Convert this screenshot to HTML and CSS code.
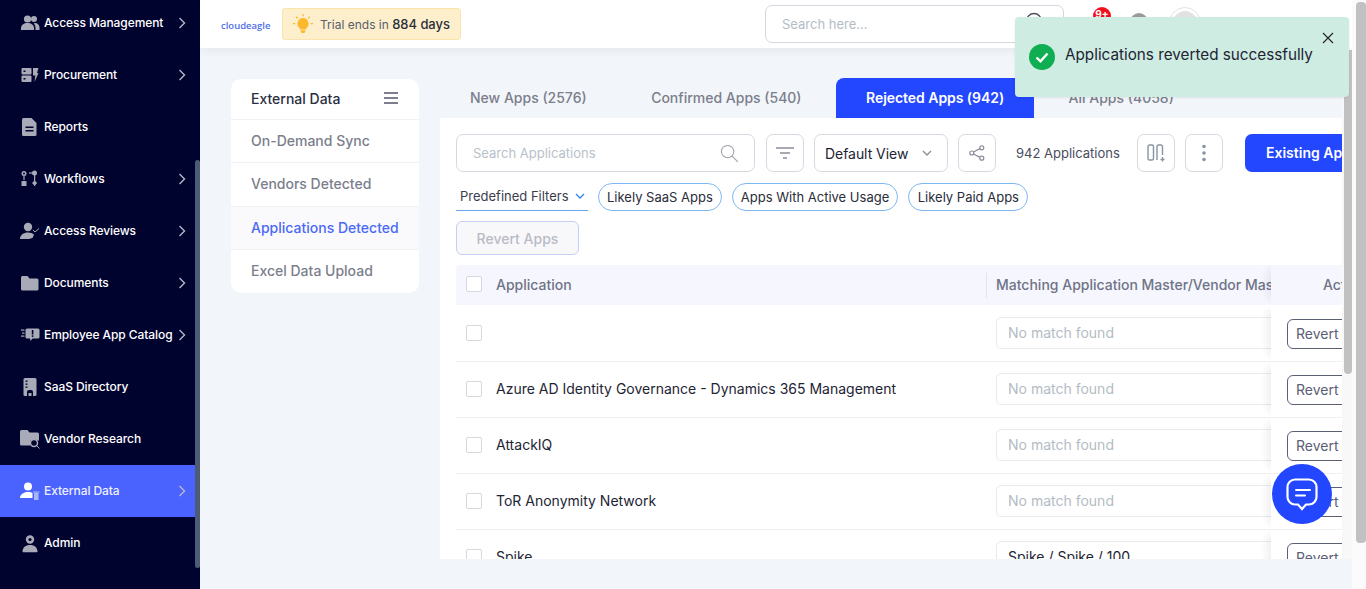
FILE: index.html
```html
<!DOCTYPE html>
<html lang="en">
<head>
<meta charset="utf-8">
<title>External Data - Applications Detected</title>
<link rel="stylesheet" href="styles.css">
</head>
<body>
<div class="app">
  <aside class="sidebar">
    <nav class="side-list">
      <a class="side-item"><svg class="ico" viewBox="0 0 20 20"><circle cx="7.500" cy="6" r="3.600"/><circle cx="14" cy="6" r="3"/><path d="M1 17v-2c0-3 3-5 6.500-5s6.500 2 6.500 5v2z"/><path d="M15 10c2.500 0 4.500 2 4.500 4.500V17H15.500v-2c0-2-.6-3.500-1.800-4.600z"/></svg><span class="side-label">Access Management</span><svg class="chev" viewBox="0 0 8 12"><path d="M1.500 1l5 5-5 5"/></svg></a>
      <a class="side-item"><svg class="ico" viewBox="0 0 20 20"><rect x="1.500" y="3" width="10" height="6.500" rx="1"/><rect x="1.500" y="10.500" width="10" height="6.500" rx="1"/><rect class="ico-cut" x="3.500" y="5.500" width="2" height="1.500"/><rect class="ico-cut" x="3.500" y="13" width="2" height="1.500"/><path d="M13 3h5.500l-1.500 5h1.500L14.500 17l.8-6.500H13z"/></svg><span class="side-label">Procurement</span><svg class="chev" viewBox="0 0 8 12"><path d="M1.500 1l5 5-5 5"/></svg></a>
      <a class="side-item"><svg class="ico" viewBox="0 0 20 20"><path d="M3.500 1h8l5 5v11.500a1.500 1.500 0 0 1-1.500 1.500H3.500A1.500 1.500 0 0 1 2 17.500v-15A1.500 1.500 0 0 1 3.500 1z"/><rect class="ico-cut" x="5.500" y="9.500" width="8" height="1.500"/><rect class="ico-cut" x="5.500" y="13" width="8" height="1.500"/></svg><span class="side-label">Reports</span></a>
      <a class="side-item"><svg class="ico" viewBox="0 0 20 20"><circle cx="4" cy="4.500" r="2.500"/><circle class="ico-cut" cx="4" cy="4.500" r="1"/><rect x="3.400" y="7" width="1.200" height="4"/><rect x="1.500" y="12" width="5" height="5" rx=".6"/><circle cx="14.500" cy="4" r="2.500"/><rect x="9" y="3.400" width="5" height="1.200"/><rect x="14" y="4" width="1.200" height="13"/><path d="M14.600 11.500l2.600 2.600-2.600 2.600-2.600-2.600z"/></svg><span class="side-label">Workflows</span><svg class="chev" viewBox="0 0 8 12"><path d="M1.500 1l5 5-5 5"/></svg></a>
      <a class="side-item"><svg class="ico" viewBox="0 0 20 20"><circle cx="8" cy="6" r="4.200"/><path d="M0 18c0-4 3.500-6.500 8-6.500 2.500 0 4.700.8 6 2.200L12.500 17 9 18z"/><path class="ico-line" d="M13 9l2 2 4-3.500"/></svg><span class="side-label">Access Reviews</span><svg class="chev" viewBox="0 0 8 12"><path d="M1.500 1l5 5-5 5"/></svg></a>
      <a class="side-item"><svg class="ico" viewBox="0 0 20 20"><path d="M2.500 3h5l2 2.500h7.500a1.500 1.500 0 0 1 1.500 1.500v9a1.500 1.500 0 0 1-1.500 1.500h-14.500A1.500 1.500 0 0 1 1 16V4.500A1.500 1.500 0 0 1 2.500 3z"/></svg><span class="side-label">Documents</span><svg class="chev" viewBox="0 0 8 12"><path d="M1.500 1l5 5-5 5"/></svg></a>
      <a class="side-item"><svg class="ico" viewBox="0 0 20 20"><rect x="1" y="4.500" width="3.500" height="1.200"/><rect x="2" y="7.500" width="2.500" height="1.200"/><rect x="1" y="10.500" width="3.500" height="1.200"/><path d="M7 3.500h11a1.500 1.500 0 0 1 1.500 1.500v7a1.500 1.500 0 0 1-1.500 1.500h-5.500l-2 2.500-.5-2.500H7A1.500 1.500 0 0 1 5.500 12V5A1.500 1.500 0 0 1 7 3.500z"/><rect class="ico-cut" x="11.800" y="5" width="1.600" height="4.500"/><rect class="ico-cut" x="11.800" y="10.300" width="1.600" height="1.600"/></svg><span class="side-label">Employee App Catalog</span><svg class="chev" viewBox="0 0 8 12"><path d="M1.500 1l5 5-5 5"/></svg></a>
      <a class="side-item"><svg class="ico" viewBox="0 0 20 20"><rect x="3.500" y="1" width="13" height="18" rx="1.500"/><rect class="ico-cut" x="5.500" y="3.500" width="2" height="1.300"/><rect class="ico-cut" x="5.500" y="6.500" width="2" height="1.300"/><rect class="ico-cut" x="5.500" y="9.500" width="2" height="1.300"/><path class="ico-cut" d="M7 19v-4a2 2 0 0 1 2-2h2a2 2 0 0 1 2 2v4z"/><rect x="8.500" y="16" width="3" height="3"/></svg><span class="side-label">SaaS Directory</span></a>
      <a class="side-item"><svg class="ico" viewBox="0 0 20 20"><path d="M1.500 1h6l2 2.500h8A1.500 1.500 0 0 1 19 5v6.500h-8.500v5H1.500A1.500 1.500 0 0 1 0 15V2.500A1.500 1.500 0 0 1 1.500 1z"/><circle class="ico-ring" cx="14" cy="14" r="3.500"/><path class="ico-line" d="M16.500 16.500l3 3"/></svg><span class="side-label">Vendor Research</span></a>
      <a class="side-item is-active"><svg class="ico ico-white" viewBox="0 0 20 20"><circle cx="8" cy="5.500" r="4"/><path d="M0 17c0-3.500 3.500-6 8-6 2 0 3.500.4 4.500 1v5z"/><path class="ico-doc" d="M14 11.500h4.500v7.500H14z"/><rect class="ico-doc" x="13" y="10.500" width="6.500" height="1"/></svg><span class="side-label">External Data</span><svg class="chev" viewBox="0 0 8 12"><path d="M1.500 1l5 5-5 5"/></svg></a>
      <a class="side-item"><svg class="ico" viewBox="0 0 20 20"><circle cx="10" cy="6.500" r="4.200"/><circle class="ico-cut" cx="10" cy="6.500" r="1.600"/><path d="M2.500 18.500c0-3.800 3-6.500 7.500-6.500s7.500 2.700 7.500 6.500c0 .5-.3.800-.8.800H3.300c-.5 0-.8-.3-.8-.8z"/></svg><span class="side-label">Admin</span></a>
    </nav>
    <div class="side-thumb"></div>
  </aside>

  <div class="main">
    <header class="topbar">
      <span class="logo">cloudeagle</span>
      <div class="trial">
        <svg class="bulb" viewBox="0 0 22 22"><path class="bulb-rays" d="M11 0v2.500M3.500 3l1.800 1.800M18.500 3l-1.800 1.800M0 10.500h2.500M19.500 10.500H22"/><path class="bulb-glass" d="M11 4.500a6 6 0 0 0-3.500 10.900V17h7v-1.600A6 6 0 0 0 11 4.500z"/><path class="bulb-glass" d="M8.500 18h5v1.500l-1 1.500h-3l-1-1.500z"/></svg>
        <span class="trial-text">Trial ends in <b>884 days</b></span>
      </div>
      <div class="top-search">
        <span>Search here...</span>
        <svg class="top-search-ico" viewBox="0 0 20 20"><circle cx="9" cy="9" r="7.500"/></svg>
      </div>
      <div class="bell"><span class="badge">9+</span></div>
      <span class="help-dot"></span>
      <span class="avatar"><span class="avatar-in"></span></span>
    </header>

    <div class="content">
      <section class="subnav">
        <div class="subnav-head"><span>External Data</span><svg class="burger" viewBox="0 0 14 12"><path d="M0 1h14M0 6h14M0 11h14"/></svg></div>
        <a class="subnav-item">On-Demand Sync</a>
        <a class="subnav-item">Vendors Detected</a>
        <a class="subnav-item is-current">Applications Detected</a>
        <a class="subnav-item">Excel Data Upload</a>
      </section>

      <section class="panel">
        <div class="tabs">
          <a class="tab">New Apps (2576)</a>
          <a class="tab">Confirmed Apps (540)</a>
          <a class="tab is-on">Rejected Apps (942)</a>
          <a class="tab">All Apps (4058)</a>
        </div>
        <div class="sheet">
          <div class="toolbar">
            <div class="app-search"><span>Search Applications</span><svg class="mag" viewBox="0 0 20 20"><circle cx="8" cy="8" r="6.500"/><path d="M12.800 12.800l6 6"/></svg></div>
            <button class="square"><svg class="filter-ico" viewBox="0 0 18 12"><path d="M0 1h18M4 6h10M7 11h4"/></svg></button>
            <button class="view"><span>Default View</span><svg class="view-chev" viewBox="0 0 10 6"><path d="M1 1l4 4 4-4"/></svg></button>
            <button class="square"><svg class="share-ico" viewBox="0 0 16 16"><circle cx="12.800" cy="2.800" r="2"/><circle cx="2.800" cy="8" r="2"/><circle cx="12.800" cy="13.200" r="2"/><path d="M4.500 7l6.500-3.400M4.500 9l6.500 3.400"/></svg></button>
            <span class="count">942 Applications</span>
            <button class="square sq-cols"><svg class="cols-ico" viewBox="0 0 18 18"><rect x="1" y="1" width="5.500" height="15" rx="1.500"/><path d="M10 16V2.500A1.500 1.500 0 0 1 11.500 1H14a1.500 1.500 0 0 1 1.500 1.500V11"/><path d="M15.500 13v4.500M13.500 15.500h4"/></svg></button>
            <button class="square"><svg class="dots" viewBox="0 0 4 18"><circle cx="2" cy="2.500" r="1.800"/><circle cx="2" cy="9" r="1.800"/><circle cx="2" cy="15.500" r="1.800"/></svg></button>
            <button class="primary">Existing Apps</button>
          </div>

          <div class="filters">
            <div class="predef"><span>Predefined Filters</span><svg class="predef-chev" viewBox="0 0 10 6"><path d="M1 1l4 4 4-4"/></svg></div>
            <span class="chip">Likely SaaS Apps</span>
            <span class="chip">Apps With Active Usage</span>
            <span class="chip">Likely Paid Apps</span>
          </div>

          <button class="revert-apps">Revert Apps</button>

          <div class="grid">
            <div class="row row-head">
              <div class="c-app"><span class="box"></span><span>Application</span></div>
              <div class="c-match"><span class="head-div"></span><span class="c-match-title">Matching Application Master/Vendor Master</span></div>
              <div class="c-act"><span class="act-title">Action</span></div>
            </div>
            <div class="row row-first">
              <div class="c-app"><span class="box"></span><span></span></div>
              <div class="c-match"><span class="field">No match found</span></div>
              <div class="c-act"><span class="revert">Revert</span></div>
            </div>
            <div class="row">
              <div class="c-app"><span class="box"></span><span>Azure AD Identity Governance - Dynamics 365 Management</span></div>
              <div class="c-match"><span class="field">No match found</span></div>
              <div class="c-act"><span class="revert">Revert</span></div>
            </div>
            <div class="row">
              <div class="c-app"><span class="box"></span><span>AttackIQ</span></div>
              <div class="c-match"><span class="field">No match found</span></div>
              <div class="c-act"><span class="revert">Revert</span></div>
            </div>
            <div class="row">
              <div class="c-app"><span class="box"></span><span>ToR Anonymity Network</span></div>
              <div class="c-match"><span class="field">No match found</span></div>
              <div class="c-act"><span class="revert">Revert</span></div>
            </div>
            <div class="row">
              <div class="c-app"><span class="box"></span><span>Spike</span></div>
              <div class="c-match"><span class="field is-set">Spike / Spike / 100</span></div>
              <div class="c-act"><span class="revert">Revert</span></div>
            </div>
          </div>
        </div>
      </section>
    </div>
  </div>
</div>

<div class="bar-track inner"><div class="bar-thumb inner-thumb"></div></div>
<div class="bar-track outer"><div class="bar-thumb outer-thumb"></div></div>

<div class="toast">
  <svg class="toast-ok" viewBox="0 0 26 26"><circle cx="13" cy="13" r="13"/><path d="M7.500 13.500l4 3.800 7-7.800"/></svg>
  <span class="toast-msg">Applications reverted successfully</span>
  <svg class="toast-x" viewBox="0 0 12 12"><path d="M1 1l10 10M11 1L1 11"/></svg>
</div>

<button class="chat"><svg viewBox="0 0 32 34"><path class="chat-b" d="M9 1.500h14a7.500 7.500 0 0 1 7.500 7.500v10a7.500 7.500 0 0 1-7.500 7.500h-3L16 31l-4-4.500H9A7.500 7.500 0 0 1 1.500 19V9A7.500 7.500 0 0 1 9 1.500z"/><path class="chat-l" d="M10 12h14M10 17.500h9"/></svg></button>
</body>
</html>
```

FILE: styles.css
```css
* { box-sizing: border-box; }
html, body { margin: 0; height: 100%; overflow: hidden; }
body { font-family: Inter, "Liberation Sans", sans-serif; font-size: 14px; color: #1d2433; background: #f2f5f9; }
button { font-family: inherit; padding: 0; cursor: pointer; }
.app { display: flex; height: 589px; overflow: hidden; }

/* sidebar */
.sidebar { position: relative; width: 200px; flex: none; background: #01032f; overflow: hidden; }
.side-list { display: flex; flex-direction: column; width: 195px; margin-top: -3px; }
.side-item { display: flex; align-items: center; height: 52px; padding-left: 20px; color: #fff; font-size: 12px; font-weight: 500; flex: none; }
.side-item.is-active { background: #4a63ff; color: #eef0ff; }
.side-label { margin-left: 4px; padding-bottom: 2px; letter-spacing: -.08px; white-space: nowrap; }
.ico { width: 20px; height: 20px; flex: none; fill: #a8aab8; margin-top: -1px; }
.ico-white { fill: #fff; }
.ico-doc { fill: #a9b4fb; }
.ico-cut { fill: #01032f; }
.ico-line { fill: none; stroke: #a8aab8; stroke-width: 1; }
.ico-ring { fill: #01032f; stroke: #a8aab8; stroke-width: 1.500; }
.chev { width: 8px; height: 12px; margin-left: auto; margin-right: 9px; fill: none; stroke: #b6b9c8; stroke-width: 1.400; flex: none; }
.side-thumb { position: absolute; left: 195px; top: 160px; width: 5px; height: 408px; background: #4e5b76; border-radius: 3px; }

/* main column */
.main { flex: 1; min-width: 0; display: flex; flex-direction: column; }
.topbar { position: relative; z-index: 2; display: flex; align-items: center; height: 48px; flex: none; background: #fff; box-shadow: 0 2px 10px rgba(40, 50, 90, .07); padding-left: 21px; }
.logo { width: 50px; color: #4f6fe8; font-family: "Open Sans", sans-serif; font-size: 9.500px; font-weight: 600; white-space: nowrap; margin-top: 2px; }
.trial { display: flex; align-items: center; height: 32px; width: 179px; margin-left: 11px; padding-left: 10px; background: #fdefcb; border: 1px solid #fbe4ac; border-radius: 3px; font-size: 12px; color: #5a5d6b; }
.trial b { font-size: 13px; font-weight: 500; letter-spacing: -.05px; color: #2d303c; }
.trial-text { margin-left: 7px; white-space: nowrap; }
.bulb { width: 20px; height: 20px; flex: none; }
.bulb-rays { fill: none; stroke: #fbb92e; stroke-width: 1.300; }
.bulb-glass { fill: #fbb92e; }
.top-search { position: relative; display: flex; align-items: center; width: 299px; height: 38px; margin-left: 304px; margin-top: -1px; padding-left: 16px; background: #fff; border: 1px solid #d5d7e0; border-radius: 7px; color: #b4bcc6; font-size: 13px; flex: none; }
.top-search-ico { position: absolute; left: 259px; top: 6px; width: 20px; height: 20px; fill: none; stroke: #4b4e5c; stroke-width: 1.300; }
.bell { position: relative; width: 18px; height: 30px; margin-left: 29px; flex: none; }
.badge { position: absolute; left: 0; top: -2px; width: 18px; height: 18px; border-radius: 50%; background: #f00f1e; color: #fff; font-size: 10px; font-weight: 700; text-align: center; line-height: 14px; }
.help-dot { width: 18px; height: 18px; margin-left: 19px; margin-bottom: 4px; border-radius: 50%; background: #9a9a9f; flex: none; }
.avatar { display: flex; align-items: center; justify-content: center; width: 32px; height: 32px; margin-left: 21px; margin-bottom: 2px; border: 1px solid #e3e3e6; border-radius: 50%; flex: none; }
.avatar-in { width: 24px; height: 24px; border-radius: 50%; background: #e2e2e4; }

/* content */
.content { flex: 1; min-height: 0; display: flex; align-items: flex-start; gap: 21px; padding: 30px 23px 30px 31px; }
.subnav { width: 188px; flex: none; margin-top: 1px; background: #fff; border-radius: 10px; overflow: hidden; }
.subnav-head { display: flex; align-items: center; justify-content: space-between; height: 41px; padding: 0 21px 2px 20px; font-weight: 500; color: #2a2f42; border-bottom: 1px solid #f0f1f4; }
.burger { width: 14px; height: 12px; fill: none; stroke: #54566a; stroke-width: 1.700; }
.subnav-item { display: flex; align-items: center; height: 43.250px; padding: 0 0 1px 20px; color: #7b7e8c; font-weight: 500; border-bottom: 1px solid #f0f1f4; }
.subnav-item:last-child { border-bottom: 0; }
.subnav-item.is-current { color: #4a69f5; background: #fafafc; }

.panel { flex: 1; min-width: 0; height: 100%; display: flex; flex-direction: column; }
.tabs { display: flex; gap: 4.500px; height: 40px; flex: none; }
.tab { display: flex; align-items: center; padding: 0 30px 2px; color: #7b7e8c; font-weight: 500; white-space: nowrap; border-radius: 8px 8px 0 0; }
.tab.is-on { background: #2346ff; color: #fff; font-weight: 600; letter-spacing: -.05px; }
.sheet { flex: 1; min-height: 0; background: #fff; padding: 16px 0 0 16px; overflow: hidden; }

.toolbar { display: flex; align-items: center; height: 38px; }
.app-search { position: relative; display: flex; align-items: center; width: 299px; height: 38px; padding-left: 16px; border: 1px solid #d7d9e0; border-radius: 7px; color: #b9c1c9; font-size: 13px; flex: none; }
.mag { position: absolute; right: 15px; top: 9px; width: 19px; height: 19px; fill: none; stroke: #9ea1ad; stroke-width: 1.100; }
.square { display: flex; align-items: center; justify-content: center; width: 38px; height: 38px; margin-left: 10px; background: #fff; border: 1px solid #d7d9e0; border-radius: 7px; flex: none; }
.app-search + .square { margin-left: 11px; }
.filter-ico { width: 18px; height: 12px; fill: none; stroke: #8b8e9b; stroke-width: 1.500; }
.view { display: flex; align-items: center; justify-content: space-between; width: 134px; height: 38px; margin-left: 10px; padding: 0 15px 0 10px; background: #fff; border: 1px solid #d7d9e0; border-radius: 7px; color: #1d2433; font-size: 14px; letter-spacing: -.05px; flex: none; }
.view-chev { width: 10px; height: 6px; fill: none; stroke: #8b8e9b; stroke-width: 1.400; }
.share-ico { width: 16px; height: 16px; fill: none; stroke: #8b8e9b; stroke-width: 1.200; }
.count { margin-left: 20px; width: 121px; font-size: 13px; color: #4a4d5c; white-space: nowrap; flex: none; }
.sq-cols { margin-left: 0; }
.cols-ico { width: 18px; height: 18px; fill: none; stroke: #8795a3; stroke-width: 1.400; }
.dots { width: 4px; height: 18px; fill: #8795a3; }
.primary { width: 120px; height: 38px; margin-left: 22px; background: #2346ff; border: 0; border-radius: 7px; color: #fff; font-size: 14px; font-weight: 600; text-align: left; padding: 0 0 2px 21px; white-space: nowrap; flex: none; }

.filters { display: flex; align-items: center; gap: 10px; margin-top: 11px; height: 28px; }
.predef { display: flex; align-items: center; justify-content: space-between; width: 132px; height: 28px; padding: 0 3px 1px 4px; border-bottom: 1px solid #6aa6ec; font-size: 13px; color: #3a3d4c; flex: none; }
.predef-chev { width: 10px; height: 6px; fill: none; stroke: #2f86e8; stroke-width: 1.300; }
.chip { display: flex; align-items: center; height: 28px; padding: 0 8px; border: 1px solid #7fb7f4; border-radius: 14px; font-size: 13px; color: #2a2d3a; white-space: nowrap; flex: none; }
.chip:last-child { padding: 0 8.500px; }

.revert-apps { display: block; width: 123px; height: 34px; margin-top: 10px; background: #f8f8fb; border: 1px solid #c5cef5; border-radius: 6px; color: #b9bbc5; font-size: 14px; font-weight: 500; }

.grid { margin-top: 10px; }
.row { display: flex; height: 56px; padding-bottom: 2px; border-top: 1px solid #eeeff2; overflow: hidden; }
.row-first { border-top-color: transparent; }
.row-head { height: 40px; padding-bottom: 2px; background: #f5f6fe; border-top: 0; border-radius: 4px 0 0 0; color: #6f7386; font-weight: 500; }
.c-app { display: flex; align-items: center; gap: 14px; width: 530px; padding-left: 10px; flex: none; white-space: nowrap; }
.box { width: 16px; height: 16px; background: #fff; border: 1px solid #d7d8dd; border-radius: 2px; flex: none; }
.c-match { position: relative; display: flex; align-items: center; width: 285px; padding-left: 10px; flex: none; overflow: hidden; white-space: nowrap; }
.head-div { position: absolute; left: 0; top: 8px; width: 1px; height: 25px; background: #e3e4ec; }
.field { display: flex; align-items: center; width: 330px; height: 32px; padding-left: 11px; border: 1px solid #e9eaee; border-radius: 5px; color: #b3bcc4; flex: none; }
.field.is-set { color: #1d2433; }
.c-act { display: flex; align-items: center; flex: 1; min-width: 0; padding-left: 16px; background: #fff; box-shadow: -8px 0 8px -4px rgba(30, 30, 60, .07); clip-path: inset(0 0 0 -14px); }
.row-head .c-act { background: #f5f6fe; }
.act-title { margin-left: 36px; white-space: nowrap; }
.revert { display: flex; align-items: center; width: 70px; height: 30px; margin-top: 2px; padding-left: 8px; border: 1px solid #5c6074; border-radius: 6px; color: #5c6074; flex: none; }

/* scrollbars */
.bar-track { position: absolute; top: 48px; background: #f8f8f8; z-index: 3; }
.bar-thumb { background: #c1c1c1; }
.inner { left: 1342px; width: 10px; height: 511px; }
.inner-thumb { width: 8px; height: 324px; margin: 2px 0 0 2px; border-radius: 0 0 4px 4px; }
.outer { left: 1352px; top: 0; width: 14px; height: 589px; padding: 2px 0 0 4px; background: #fbfbfb; }
.outer-thumb { width: 10px; height: 541px; border-radius: 4px; }

/* toast */
.toast { position: absolute; z-index: 5; left: 1015px; top: 17px; display: flex; align-items: flex-start; width: 334px; height: 80px; padding: 27px 0 0 14px; background: #cfece2; border-radius: 4px; box-shadow: 0 1px 3px rgba(0, 0, 0, .08); }
.toast-ok { width: 26px; height: 26px; flex: none; }
.toast-ok circle { fill: #0fae52; }
.toast-ok path { fill: none; stroke: #fff; stroke-width: 2.400; }
.toast-msg { margin-left: 10px; font-size: 15.250px; line-height: 22px; color: #1d2433; white-space: nowrap; }
.toast-x { position: absolute; right: 15px; top: 15px; width: 12px; height: 12px; fill: none; stroke: #222; stroke-width: 1.100; }

/* chat */
.chat { position: absolute; z-index: 4; left: 1272px; top: 464px; display: flex; align-items: center; justify-content: center; width: 60px; height: 60px; border: 0; border-radius: 50%; background: #2346ff; }
.chat svg { width: 32px; height: 34px; margin-top: 1px; }
.chat-b { fill: none; stroke: #fff; stroke-width: 2.200; }
.chat-l { fill: none; stroke: #fff; stroke-width: 2; stroke-linecap: round; }
```
